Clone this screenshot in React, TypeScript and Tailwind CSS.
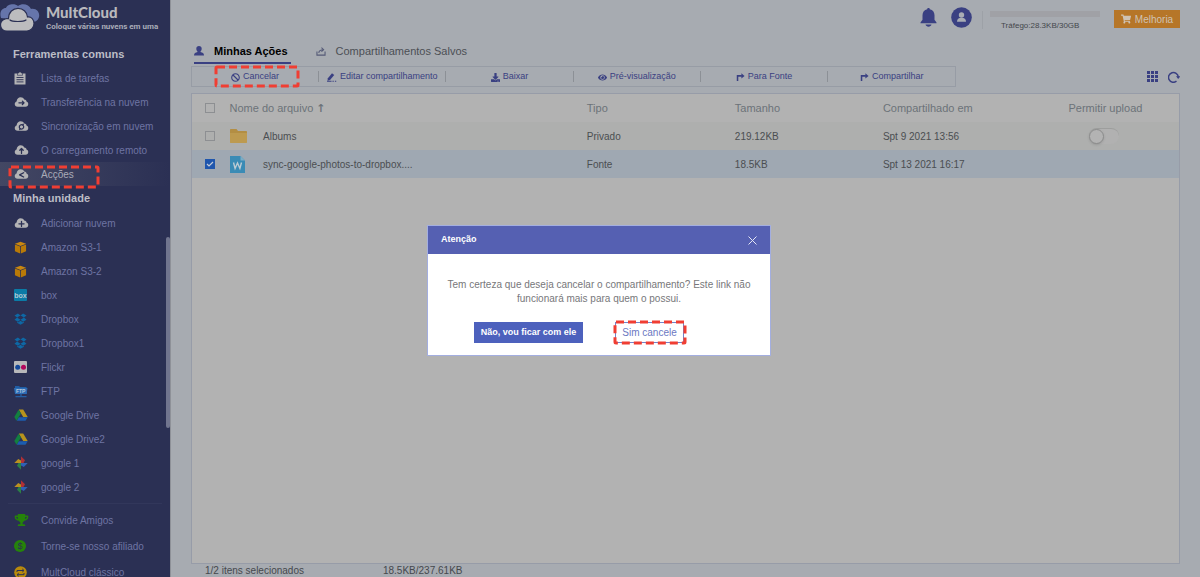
import React from "react";
import { FaBan, FaDownload, FaEye, FaShoppingCart, FaTrophy } from "react-icons/fa";

type IconProps = { className?: string };

const cloudPath =
  "M4 12.5C1.9 12.5.6 11.1.6 9.3c0-1.500 1-2.600 2.200-3C2.900 3.500 5 1.500 7.500 1.500c1.900 0 3.400 1 4.200 2.600 1.700.1 2.800 1.200 2.800 2.600 1.200.4 1.900 1.400 1.900 2.700 0 1.800-1.300 3.100-3.200 3.100z";

function CloudIcon({ children }: { children: React.ReactNode }) {
  return (
    <svg viewBox="0 0 17 14" className="h-3 w-[15px]">
      <path d={cloudPath} fill="#b3b3b5" />
      <g fill="none" stroke="#2b3054" strokeWidth="1.500" strokeLinecap="round" strokeLinejoin="round">
        {children}
      </g>
    </svg>
  );
}

function ClipboardIcon() {
  return (
    <svg viewBox="0 0 12 13" className="h-[13px] w-3">
      <path d="M.5 1.500h11v11H.5z" fill="#b3b3b5" />
      <path d="M3.500 1h1.300a1.200 1.200 0 0 1 2.400 0h1.300v2.300h-5z" fill="#b3b3b5" stroke="#2b3054" strokeWidth=".6" />
      <path d="M2.500 5.500h7M2.500 7.700h7M2.500 9.900h7" stroke="#2b3054" strokeWidth=".9" />
    </svg>
  );
}

function AmazonIcon() {
  return (
    <svg viewBox="0 0 14 14" className="h-[13px] w-[13px]">
      <path d="M7 .8 13 3 7 5.300 1 3z" fill="#c98710" />
      <path d="M1 3.700l5.600 2.200v7.500L1 11z" fill="#b97a08" />
      <path d="M13 3.700 7.400 5.900v7.500L13 11z" fill="#b97a08" />
    </svg>
  );
}

function BoxIcon() {
  return (
    <span className="flex h-3 w-[13px] items-center justify-center rounded-[1px] bg-[#0b7ba6] text-[7px] font-bold leading-none text-[#b3c9d4]">
      box
    </span>
  );
}

function DropboxIcon() {
  return (
    <svg viewBox="0 0 14 13" className="h-3 w-[13px]" fill="#0e68a5">
      <path d="M4.200.5 7 2.700 3.300 5 .5 2.800zM9.800.5 7 2.700 10.700 5l2.800-2.200zM.5 7.200 3.300 5 7 7.300 4.200 9.500zM13.500 7.200 10.700 5 7 7.300l2.800 2.200zM3.200 9.600l1 .7L7 8.300l2.800 2 1-.7v1L7 12.700l-3.800-2.100z" />
      <path d="M7 3.300 9.700 5 7 6.700 4.300 5z" fill="#2b3054" />
    </svg>
  );
}

function FlickrIcon() {
  return (
    <svg viewBox="0 0 13 12" className="h-3 w-[13px]">
      <rect width="13" height="12" rx="1" fill="#b8b8ba" />
      <circle cx="3.700" cy="6.200" r="2.500" fill="#14489a" />
      <circle cx="9.500" cy="6.200" r="2.500" fill="#b3085d" />
    </svg>
  );
}

function FtpIcon() {
  return (
    <svg viewBox="0 0 14 13" className="h-[13px] w-[14px]">
      <path d="M1 1h4l1 1h6.500l.5 7H1z" fill="#1f5da5" />
      <path d="M0 3h13.500l-1 6H1z" fill="#2d6cb5" />
      <path d="M7 9v2M1.500 11.700h11" stroke="#2560a5" strokeWidth="1.300" />
      <text x="2" y="7.800" fill="#b7c6da" fontSize="5" fontWeight="700" fontFamily="Liberation Sans">FTP</text>
    </svg>
  );
}

function DriveIcon() {
  return (
    <svg viewBox="0 0 14 12" className="h-3 w-[14px]">
      <path d="M4.800.5h4.400l4.500 7.500H9.200z" fill="#b8931c" />
      <path d="M4.600.8 6.900 4.600 2.600 11.700.3 8z" fill="#12803f" />
      <path d="M4.900 8.300h8.800l-2.200 3.500H2.800z" fill="#1c5cae" />
    </svg>
  );
}

function PhotosIcon() {
  return (
    <svg viewBox="0 0 14 14" className="h-[14px] w-[14px]">
      <path d="M7 .3 11 4.200 9.500 7H7z" fill="#b03035" />
      <path d="M13.700 7 9.800 11 7 9.500V7z" fill="#2f61b5" />
      <path d="M7 13.700 3 9.800 4.500 7H7z" fill="#2c8046" />
      <path d="M.3 7 4.200 3 7 4.500V7z" fill="#bb9020" />
    </svg>
  );
}

function CoinIcon() {
  return (
    <span className="flex h-3 w-3 items-center justify-center rounded-full bg-[#25830a] text-[9px] leading-none text-[#2b3054]">$</span>
  );
}

function ClassicIcon() {
  return (
    <svg viewBox="0 0 13 13" className="h-[13px] w-[13px]">
      <circle cx="6.500" cy="6.500" r="6.300" fill="#b98a0c" />
      <path d="M3 6V4.500h6.500M8.300 3l1.700 1.500L8.300 6M10 7v1.700H3.500M4.700 7.200 3 8.700l1.700 1.500" fill="none" stroke="#2b3054" strokeWidth="1" />
    </svg>
  );
}

function Logo() {
  return (
    <svg viewBox="0 0 40 32" className="h-8 w-10 shrink-0">
      <path
        d="M1 18C-1 12 2 8 6 8c1-4 9-5 12-2 4-3 11-2 13 3 6-1 9 4 8 8-1 4-4 5-7 5z"
        fill="#6675ab"
      />
      <path
        d="M7 31C3 31 .5 28.500 .5 25c0-3 2-5.500 5-6.200 1-.3 2-.3 3 0C8.500 12 13 8.300 18 8.300c5 0 9 3.500 9.500 8.700 4-.5 6.500 2.500 6.500 6.500 0 4-3 7.500-7 7.500z"
        fill="#bcbcbe"
        stroke="#2b3054"
        strokeWidth="1.200"
      />
      <path d="M10 20c2 2 13.500 2 16 0" fill="none" stroke="#2b3054" strokeWidth="1.200" strokeLinecap="round" />
    </svg>
  );
}

function PersonIcon({ className }: IconProps) {
  return (
    <svg viewBox="0 0 10 10" className={className} fill="currentColor">
      <path d="M5 0c1.700 0 2.700 1.100 2.700 2.700 0 1-.5 2.100-1.200 2.700v.7C8.500 6.700 10 7.300 10 9.500H0c0-2.200 1.500-2.800 3.500-3.400v-.7C2.800 4.800 2.300 3.700 2.300 2.700 2.300 1.100 3.300 0 5 0z" />
    </svg>
  );
}

function ShareBoxIcon() {
  return (
    <svg viewBox="0 0 11 10" className="h-[9px] w-[10px]" fill="none" stroke="#555a77" strokeWidth="1.200">
      <path d="M1 5v4h9V5M3 6.500c.3-2.500 2-3.500 5-3.500M6 .8 8.400 3 6 5.200" />
    </svg>
  );
}

function EditIcon() {
  return (
    <svg viewBox="0 0 11 10" className="h-[9px] w-[10px]" fill="currentColor">
      <path d="M5.500.3 8 2.200 3.300 7.800.5 8.500l.4-2.700z" />
      <path d="M0 8.600h5v1.200H0zM6 8.600h1.500v1.200H6zM8.700 8.600h1.500v1.200H8.700z" />
    </svg>
  );
}

function TurnIcon() {
  return (
    <svg viewBox="0 0 9 10" className="h-[9px] w-[9px]">
      <path d="M1.200 9V3.200H6" fill="none" stroke="currentColor" strokeWidth="1.700" />
      <path d="M5.500.3 9 3.200 5.500 6z" fill="currentColor" />
    </svg>
  );
}

function BellIcon() {
  return (
    <svg viewBox="0 0 17 19" className="h-[19px] w-[17px]" fill="currentColor">
      <path d="M8.500 0c.8 0 1.300.5 1.300 1.300 3 .6 4.700 3 4.700 6v4.500l2 2.700v.8H.5v-.8l2-2.700V7.300c0-3 1.700-5.400 4.700-6C7.200.5 7.700 0 8.500 0zM5.500 16.500h6c-.4 1.400-1.500 2.200-3 2.200s-2.600-.8-3-2.200z" />
    </svg>
  );
}

function UserCircle() {
  return (
    <svg viewBox="0 0 21 21" className="h-[21px] w-[21px]">
      <circle cx="10.500" cy="10.500" r="10.300" fill="#3a4082" />
      <circle cx="10.500" cy="8" r="2.700" fill="#a9adb4" />
      <path d="M6 14.700c0-2.500 1.500-4 4.500-4s4.500 1.500 4.500 4z" fill="#a9adb4" />
    </svg>
  );
}

function GridIcon() {
  const steps = [0, 4, 8];
  return (
    <svg viewBox="0 0 11 11" className="h-[11px] w-[11px]" fill="#3a4082">
      {steps.map((y) => steps.map((x) => <rect key={`${x}-${y}`} x={x} y={y} width="3" height="3" />))}
    </svg>
  );
}

function RefreshIcon() {
  return (
    <svg viewBox="0 0 12 12" className="h-3 w-3">
      <path d="M8.500 10.200a4.900 4.900 0 1 1 1.800-4.400" fill="none" stroke="#3a4082" strokeWidth="1.500" />
      <path d="M8 5.300h4.300L10.200 8z" fill="#3a4082" />
    </svg>
  );
}

function FolderIcon() {
  return (
    <svg viewBox="0 0 17 14" className="h-[14px] w-[17px]">
      <path d="M0 1C0 .4.400 0 1 0h5.500l1.500 2h8c.6 0 1 .4 1 1v10.300H0z" fill="#b38e43" />
      <path d="M0 4h17v9c0 .6-.4 1-1 1H1c-.6 0-1-.4-1-1z" fill="#bd9a4f" />
    </svg>
  );
}

function WordIcon() {
  return (
    <svg viewBox="0 0 15 17" className="h-[17px] w-[15px]">
      <path d="M0 0h10.500L15 4.500V17H0z" fill="#3a8bb5" />
      <path d="M10.500 0 15 4.500h-4.500z" fill="#7badc5" />
      <path d="m3.500 6.500 1.600 6 2.400-5.500 2.400 5.500 1.600-6" fill="none" stroke="#bccbd3" strokeWidth="1.400" />
    </svg>
  );
}

function Highlight({ className }: IconProps) {
  return (
    <span className={`pointer-events-none absolute ${className}`} aria-hidden="true">
      <svg className="block h-full w-full overflow-visible">
        <rect width="100%" height="100%" fill="none" stroke="#f03e33" strokeWidth="3" strokeDasharray="8 4" rx="1" />
      </svg>
    </span>
  );
}

type Entry = { label: string; icon: React.ReactNode; active?: boolean };

const tools: Entry[] = [
  { label: "Lista de tarefas", icon: <ClipboardIcon /> },
  { label: "Transferência na nuvem", icon: <CloudIcon><path d="M5.500 8h6M9.500 6l2 2-2 2" /></CloudIcon> },
  {
    label: "Sincronização em nuvem",
    icon: <CloudIcon><path d="M6 8.500a2.500 2.500 0 0 1 4.200-2.300M11 7.500a2.500 2.500 0 0 1-4.200 2.300M10.500 4.800v1.600M6.500 11.200V9.600" /></CloudIcon>,
  },
  { label: "O carregamento remoto", icon: <CloudIcon><path d="M8.500 11V5.500M6.500 7.300l2-2 2 2" /></CloudIcon> },
  { label: "Acções", active: true, icon: <CloudIcon><path d="M11 5.500 6.300 8l4.700 2.500" /></CloudIcon> },
];

const drives: Entry[] = [
  { label: "Adicionar nuvem", icon: <CloudIcon><path d="M8.500 5v6M5.500 8h6" /></CloudIcon> },
  { label: "Amazon S3-1", icon: <AmazonIcon /> },
  { label: "Amazon S3-2", icon: <AmazonIcon /> },
  { label: "box", icon: <BoxIcon /> },
  { label: "Dropbox", icon: <DropboxIcon /> },
  { label: "Dropbox1", icon: <DropboxIcon /> },
  { label: "Flickr", icon: <FlickrIcon /> },
  { label: "FTP", icon: <FtpIcon /> },
  { label: "Google Drive", icon: <DriveIcon /> },
  { label: "Google Drive2", icon: <DriveIcon /> },
  { label: "google 1", icon: <PhotosIcon /> },
  { label: "google 2", icon: <PhotosIcon /> },
];

const extras: Entry[] = [
  { label: "Convide Amigos", icon: <FaTrophy className="h-3 w-[15px] text-[#25830a]" /> },
  { label: "Torne-se nosso afiliado", icon: <CoinIcon /> },
  { label: "MultCloud clássico", icon: <ClassicIcon /> },
];

function NavItem({ label, icon, active }: Entry) {
  return (
    <li className="relative">
      <a
        href="#"
        className={`flex h-6 items-center gap-2 pl-3 text-[10px] ${
          active ? "bg-linear-to-r from-[#434763] to-[#2b3054] text-[#a9abb8]" : "text-[#6e74a3]"
        }`}
      >
        <span className="flex w-[21px] items-center pl-[2px]">{icon}</span>
        {label}
      </a>
      {active && <Highlight className="top-[5px] left-[10px] h-5 w-[88px]" />}
    </li>
  );
}

function Sidebar() {
  return (
    <aside className="relative w-[170px] shrink-0 overflow-hidden bg-[#2b3054]">
      <div className="flex h-[42px] items-start">
        <Logo />
        <div className="pl-[6px] pt-1 whitespace-nowrap">
          <div className="font-['Lato'] text-[15px] font-black leading-4 text-[#b9b9bd]">MultCloud</div>
          <div className="font-['Roboto'] text-[8px] font-bold leading-[14px] text-[#a9abb8]">Coloque várias nuvens em uma</div>
        </div>
      </div>
      <nav>
        <h2 className="pl-[13px] text-[11px] font-bold leading-6 text-[#bcbdc6]">Ferramentas comuns</h2>
        <ul>{tools.map((t) => <NavItem key={t.label} {...t} />)}</ul>
        <h2 className="pl-[13px] text-[11px] font-bold leading-6 text-[#bcbdc6]">Minha unidade</h2>
        <ul className="pt-px">{drives.map((t) => <NavItem key={t.label} {...t} />)}</ul>
        <hr className="mx-2 my-1 border-[#32375b]" />
        <ul className="flex flex-col gap-[2px]">{extras.map((t) => <NavItem key={t.label} {...t} />)}</ul>
      </nav>
      <div className="absolute top-[237px] right-0 h-[191px] w-1 rounded-sm bg-[#71758f]" />
    </aside>
  );
}

const actions = [
  { label: "Cancelar", icon: <FaBan className="h-[9px] w-[9px]" />, marked: true },
  { label: "Editar compartilhamento", icon: <EditIcon /> },
  { label: "Baixar", icon: <FaDownload className="h-[9px] w-[9px]" /> },
  { label: "Pré-visualização", icon: <FaEye className="h-[9px] w-[9px]" /> },
  { label: "Para Fonte", icon: <TurnIcon /> },
  { label: "Compartilhar", icon: <TurnIcon /> },
];

const files = [
  { name: "Albums", icon: <FolderIcon />, type: "Privado", size: "219.12KB", date: "Spt 9 2021 13:56", checked: false, upload: true },
  { name: "sync-google-photos-to-dropbox....", icon: <WordIcon />, type: "Fonte", size: "18.5KB", date: "Spt 13 2021 16:17", checked: true, upload: false },
];

function Tick({ checked, label }: { checked?: boolean; label: string }) {
  return (
    <input
      type="checkbox"
      defaultChecked={checked}
      aria-label={label}
      className="block h-[10px] w-[10px] appearance-none border border-[#8d8f92] bg-center bg-no-repeat checked:border-[#1f56ad] checked:bg-[#1f56ad] checked:bg-[url('data:image/svg+xml,%3Csvg%20xmlns=%22http://www.w3.org/2000/svg%22%20viewBox=%220%200%208%208%22%3E%3Cpath%20d=%22M1%204l2%202%204-4%22%20fill=%22none%22%20stroke=%22%23c3cbd8%22%20stroke-width=%221.2%22/%3E%3C/svg%3E')]"
    />
  );
}

function FileTable() {
  return (
    <table className="w-full table-fixed text-left">
      <colgroup>
        <col className="w-[3.8%]" />
        <col className="w-[3.400%]" />
        <col className="w-[32.800%]" />
        <col className="w-[15%]" />
        <col className="w-[15%]" />
        <col className="w-[18.8%]" />
        <col />
      </colgroup>
      <thead>
        <tr className="h-7 text-[11px] text-[#6c7279]">
          <th className="pl-[13px]"><Tick label="Selecionar tudo" /></th>
          <th colSpan={2} className="font-normal">Nome do arquivo <span className="font-['DejaVu_Sans'] font-bold leading-none">↑</span></th>
          <th className="font-normal">Tipo</th>
          <th className="font-normal">Tamanho</th>
          <th className="font-normal">Compartilhado em</th>
          <th className="font-normal whitespace-nowrap">Permitir upload</th>
        </tr>
      </thead>
      <tbody>
        {files.map((f) => (
          <tr key={f.name} className={`h-7 text-[10px] text-[#4b4e51] ${f.checked ? "bg-[#9fa8b2]" : "bg-[#aeafae]"}`}>
            <td className="pl-[13px]"><Tick checked={f.checked} label={f.name} /></td>
            <td>{f.icon}</td>
            <td>{f.name}</td>
            <td>{f.type}</td>
            <td>{f.size}</td>
            <td>{f.date}</td>
            <td>
              {f.upload && (
                <label className="ml-[21px] flex h-4 w-[30px] items-center rounded-full border-t border-[#9d9e9d] bg-[#b1b1b1]">
                  <input type="checkbox" aria-label="Permitir upload" className="h-[15px] w-[15px] appearance-none rounded-full border border-[#8b8c8c] bg-[#b3b3b3] shadow-sm" />
                </label>
              )}
            </td>
          </tr>
        ))}
      </tbody>
    </table>
  );
}

function Main() {
  return (
    <main className="flex min-w-0 flex-1 flex-col border-l border-[#8e9198] bg-[#a7abb1] px-5">
      <header className="flex h-10 shrink-0 items-start justify-end pt-[7px] text-[#3a4082]">
        <button aria-label="Notificações" className="mr-[14px] pt-px"><BellIcon /></button>
        <button aria-label="Conta"><UserCircle /></button>
        <div className="mt-1 ml-[10px] h-[18px] border-l border-[#9da1a7]" />
        <div className="mr-[14px] ml-[7px] w-[110px] pt-1">
          <div className="h-[6px] bg-[#a0a1a6]" />
          <p className="pl-[11px] pt-[2px] text-[8px] leading-[14px] text-[#44474c]">Tráfego:28.3KB/30GB</p>
        </div>
        <button className="mt-[3px] flex h-[18px] w-[66px] items-center justify-center gap-1 bg-[#b67628] text-[10px] text-[#cfc3b4]">
          <FaShoppingCart /> Melhoria
        </button>
      </header>
      <div className="flex h-[26px] shrink-0 items-start gap-[25px] pl-[3px] text-[11px]">
        <button className="flex h-6 items-center gap-[10px] border-b-2 border-[#3a4082] pr-[3px] font-bold text-black">
          <PersonIcon className="h-[10px] w-[10px] text-[#3a4082]" />
          Minhas Ações
        </button>
        <button className="flex h-[22px] items-center gap-[10px] text-[#4c4f55]">
          <ShareBoxIcon />
          Compartilhamentos Salvos
        </button>
      </div>
      <div className="flex shrink-0 items-center justify-between">
        <div className="grid h-[21px] w-[77.4%] grid-cols-6 items-center border border-[#979ca5]">
          {actions.map((a) => (
            <div key={a.label} className="relative flex h-[11px] items-center justify-center border-r border-[#8c9096] last:border-r-0">
              <button className="flex items-center gap-[3px] pt-px text-[9px] whitespace-nowrap text-[#3a4082]">
                {a.icon}
                {a.label}
              </button>
              {a.marked && <Highlight className="-inset-y-1 left-6 w-[82px]" />}
            </div>
          ))}
        </div>
        <div className="flex items-center gap-[10px]">
          <button aria-label="Grade"><GridIcon /></button>
          <button aria-label="Atualizar"><RefreshIcon /></button>
        </div>
      </div>
      <section className="mt-[6px] min-h-0 flex-1 border border-[#979ca8] bg-[#b2b2b2]">
        <FileTable />
      </section>
      <footer className="flex h-[13px] shrink-0 gap-[79px] pl-[14px] text-[10px] leading-[14px] text-[#45484d]">
        <span>1/2 itens selecionados</span>
        <span>18.5KB/237.61KB</span>
      </footer>
    </main>
  );
}

function CancelDialog() {
  return (
    <div className="fixed inset-0 flex items-center justify-center pt-1 pr-[2px]">
      <div role="dialog" aria-labelledby="dialog-title" className="w-[344px] border border-[#a3aee0] bg-white">
        <div className="flex h-7 items-center justify-between bg-[#5560b2] px-[13px] text-white">
          <h1 id="dialog-title" className="text-[9px] font-bold">Atenção</h1>
          <button aria-label="Fechar">
            <svg viewBox="0 0 9 9" className="h-[9px] w-[9px]" stroke="#e5e7f5" strokeWidth="1"><path d="m.5.5 8 8M8.500.5l-8 8" /></svg>
          </button>
        </div>
        <p className="px-4 pt-6 text-center text-[10px] leading-[14px] text-[#77777a]">
          Tem certeza que deseja cancelar o compartilhamento? Este link não funcionará mais para quem o possui.
        </p>
        <div className="flex gap-8 pt-4 pb-3 pl-[46px]">
          <button className="h-[21px] w-[109px] bg-[#4d61bd] text-[9px] font-bold whitespace-nowrap text-white">Não, vou ficar com ele</button>
          <div className="relative">
            <button className="block h-[21px] w-[69px] border border-[#7484c9] text-[10px] whitespace-nowrap text-[#6b78c2]">Sim cancele</button>
            <Highlight className="inset-0 -right-px" />
          </div>
        </div>
      </div>
    </div>
  );
}

export default function App() {
  return (
    <div className="flex h-screen overflow-hidden font-['Liberation_Sans',Arial,sans-serif]">
      <Sidebar />
      <Main />
      <CancelDialog />
    </div>
  );
}
